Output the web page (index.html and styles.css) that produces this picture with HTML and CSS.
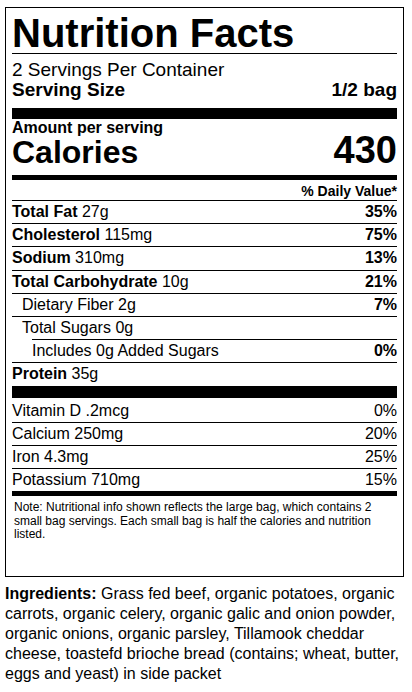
FILE: index.html
```html
<html>
<head>
    <meta charset="UTF-8">
    <meta name="viewport" content="width=device-width, initial-scale=1.0">
    <title>Nutrition Facts</title>
    <link rel="stylesheet" href="styles.css">
</head>
<body>

    <div class="label">
        <h1 class="title">Nutrition Facts</h1>

        <div class="servings">
            <p>2 Servings Per Container</p>
            <p class="serving-size"><span>Serving Size</span><span>1/2 bag</span></p>
        </div>

        <div class="calories">
            <p class="amount">Amount per serving</p>
            <p class="calories-row"><span>Calories</span><span class="cal-value">430</span></p>
        </div>

        <p class="dv-head">% Daily Value*</p>

        <div class="row"><span><b>Total Fat</b> 27g</span><b>35%</b></div>
        <div class="row"><span><b>Cholesterol</b> 115mg</span><b>75%</b></div>
        <div class="row"><span><b>Sodium</b> 310mg</span><b>13%</b></div>
        <div class="row"><span><b>Total Carbohydrate</b> 10g</span><b>21%</b></div>
        <div class="row sub"><span>Dietary Fiber 2g</span><b>7%</b></div>
        <div class="row sub"><span>Total Sugars 0g</span></div>
        <div class="row sub-2"><span>Includes 0g Added Sugars</span><b>0%</b></div>
        <div class="row protein"><span><b>Protein</b> 35g</span></div>

        <div class="row first"><span>Vitamin D .2mcg</span><span>0%</span></div>
        <div class="row"><span>Calcium 250mg</span><span>20%</span></div>
        <div class="row"><span>Iron 4.3mg</span><span>25%</span></div>
        <div class="row vitamins-end"><span>Potassium 710mg</span><span>15%</span></div>

        <p class="note">Note: Nutritional info shown reflects the large bag, which contains 2 small bag servings. Each small bag is half the calories and nutrition listed.</p>
    </div>

    <p class="ingredients"><b>Ingredients:</b> Grass fed beef, organic potatoes, organic carrots, organic celery, organic galic and onion powder, organic onions, organic parsley, Tillamook cheddar cheese, toastefd brioche bread (contains; wheat, butter, eggs and yeast) in side packet</p>

</body>
</html>
```

FILE: styles.css
```css
body {
    font-family: "Liberation Sans", Arial, sans-serif;
    margin: 7px 5px;
    color: #000;
    background: #fff;
}
p {
    margin: 0;
}
.label {
    width: 399px;
    box-sizing: border-box;
    border: 1px solid #000;
    padding: 0 6px;
}
.title {
    margin: 5px 0 0;
    font-size: 40px;
    line-height: 40px;
    font-weight: bold;
    border-bottom: 1px solid #000;
}
.servings {
    padding-top: 6px;
    padding-bottom: 8px;
    font-size: 19px;
    line-height: 20px;
    border-bottom: 11px solid #000;
}
.serving-size {
    display: flex;
    justify-content: space-between;
    font-weight: bold;
}
.calories {
    padding-top: 1px;
    border-bottom: 5px solid #000;
    font-weight: bold;
}
.amount {
    font-size: 16px;
    line-height: 16px;
}
.calories-row {
    display: flex;
    justify-content: space-between;
    align-items: baseline;
    font-size: 32px;
    line-height: 28px;
    padding-bottom: 9px;
}
.cal-value {
    font-size: 38px;
}
.dv-head {
    text-align: right;
    font-size: 14px;
    line-height: 17px;
    font-weight: bold;
    padding-top: 3px;
}
.row {
    display: flex;
    justify-content: space-between;
    font-size: 16px;
    line-height: 18.2px;
    padding: 2px 0;
    border-top: 1px solid #000;
}
.row.sub {
    padding-left: 10px;
}
.row.sub-2 {
    margin-left: 20px;
}
.row.protein {
    border-bottom: 12px solid #000;
}
.row.first {
    border-top: none;
    padding-top: 4px;
}
.row.vitamins-end {
    border-bottom: 5px solid #000;
}
.note {
    font-size: 12px;
    line-height: 13.5px;
    padding: 5px 2px 34px;
}
.ingredients {
    margin-top: 7px;
    font-size: 16px;
    line-height: 20px;
}
```
